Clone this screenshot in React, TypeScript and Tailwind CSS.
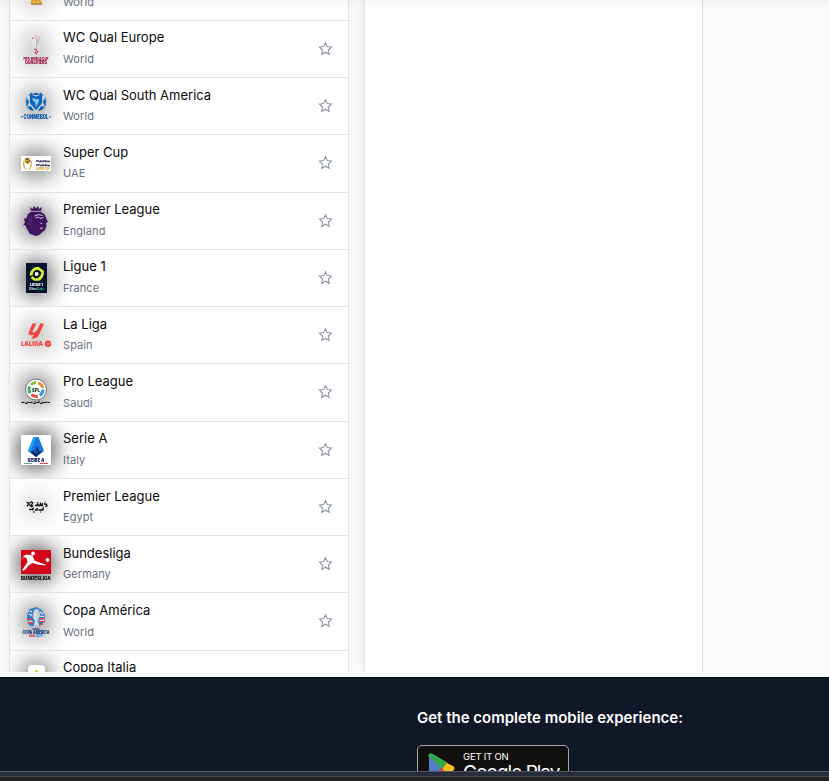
import React from "react";

type League = { name: string; region: string; logo: React.ReactNode };

const T = (p: { x?: number; y: number; w: number; size: number; fill: string; children: string; weight?: number }) => (
  <text
    x={p.x ?? 15}
    y={p.y}
    textAnchor="middle"
    textLength={p.w}
    lengthAdjust="spacingAndGlyphs"
    fontSize={p.size}
    fontWeight={p.weight ?? 900}
    fill={p.fill}
    fontFamily="Inter, sans-serif"
  >
    {p.children}
  </text>
);

const Logo = ({ children }: { children: React.ReactNode }) => (
  <svg viewBox="0 0 30 30" className="mt-px h-[30px] w-[30px] shrink-0 overflow-visible drop-shadow-[0_0_12px_#000]">
    {children}
  </svg>
);

const GoldCup = () => (
  <Logo>
    <path d="M12 17h6l1.500 6 2 4H9.500l1-4z" fill="#e5a21a" />
    <path d="M12 22h6M12 25h2m2 0h2" stroke="#fff1a8" strokeWidth="1.2" />
    <path d="M10 27.200h11" stroke="#80602f" strokeWidth=".8" />
  </Logo>
);

const WorldCup = () => (
  <Logo>
    <path d="M11 2q4-4 8 0 1 5-2 9l-1 9h-3l-1-9q-3-4-1-9" fill="#e6e0df" />
    <path d="M15 1l1 9-1 5M18.500 3l-2 7" fill="none" stroke="#a6a0a1" strokeWidth=".8" />
    <path d="M11 5l1.500-1.500M13 15l3 1-2 3 2 1m1-3-1 2" fill="none" stroke="#bd2952" strokeWidth="1" />
    <T y={26} w={25} size={4} fill="#9c123e">FIFA WORLD CUP</T>
    <T y={29.700} w={22} size={4.600} fill="#9c123e">QUALIFIERS</T>
  </Logo>
);

const Conmebol = () => (
  <Logo>
    <path d="M8 2.500l3-2 1 3-2 3zM22 2.500l-3-2-1 3 2 3zM5 6l3 3-1 4-2 1zM25 6l-3 3 1 4 2 1zM6 15l4-1 3 5-4-1zM24 15l-4-1-3 5 4-1z" fill="#0a66b8" />
    <path d="M13 1h4l1 2h-6zM9 5l3-1.500 3 1 3-1L21 5v6l-6 7-6-7z" fill="#0a66b8" />
    <path d="M12 6l3 1h3v2.500L15 15l-1-4.500-3-3z" fill="#86c3ea" />
    <path d="M6 5q-2.500 6 2 11M24 5q2.500 6-2 11" fill="none" stroke="#3d93d0" strokeWidth=".8" />
    <T y={27} w={25} size={6} fill="#0a58a8">CONMEBOL</T>
    <path d="M0 24.800h1.500m27 0H30" stroke="#0a58a8" strokeWidth="1.200" />
  </Logo>
);

const SuperCup = () => (
  <Logo>
    <path fill="#fff" d="M0 7h30v15H0z" />
    <path d="M3 12q-1.500 6 2.500 8.500M10 12q1.500 6-2.500 8.500" fill="none" stroke="#e0b14a" strokeWidth="1.400" />
    <circle cx="6.500" cy="11.500" r="3" fill="#d9a833" />
    <path d="M4.500 10l1.500 1 1-2m1 2 1 1.500m-3.500.5H7v1.500" stroke="#242027" fill="none" strokeWidth=".9" />
    <path d="M15 12h2v-1m1 1.500h2v-1.500m1 1.500h2V11m1 1.500h1V11m1 1.500h3M15 16h3v-1m1 1.500h3V15m1 1.500h2V15m1 1.500h3" fill="none" stroke="#433c65" strokeWidth="1.300" />
    <T x={22} y={20.800} w={14} size={3.400} fill="#d6a42c">SUPER CUP</T>
  </Logo>
);

const PremierLeague = () => (
  <Logo>
    <path d="M9 1l2.500 2L13 0l2 2.500L17 0l1 3 3-2-1 4.500H10z" fill="#41145f" />
    <path d="M10 6h10q4 1.500 5 6l2 4-2 1 .5 3-1.500 4-3 2.500-3 2.500-3 1-6-2-3-5-2-4-2 .5 2-3-1-3.500 2.500-1L7 8z" fill="#41145f" />
    <path d="M10 5.300h10" stroke="#b9aec3" strokeWidth=".7" />
    <path d="M13.500 10q4-2.500 8-.5m-7 2.500 3-1 1.500 1.500 3.500-1m-3 5.500 1.500.8M19 22.500l3-.5" fill="none" stroke="#d9cede" strokeWidth="1" />
    <path d="M7 11l4 2-3 1 3 2-4 1 4 3" fill="none" stroke="#5b3075" strokeWidth=".7" />
  </Logo>
);

const Ligue1 = () => (
  <Logo>
    <path fill="#07132e" d="M5 0h21v30H5z" />
    <path d="M10 12.500q0-4 3.500-6.500l5-.5M10.500 14l3 2.500h4q3.500-2 4-6M13.500 5.500h4l4 3v3" fill="none" stroke="#d3ee35" strokeWidth="2.700" />
    <circle cx="15.600" cy="11" r="2" fill="#fff" />
    <T x={15.500} y={22.500} w={13} size={3.500} fill="#fff">LIGUE 1</T>
    <T x={12} y={26.500} w={8} size={3} fill="#b8cad0">Uber</T>
    <T x={19.500} y={26.500} w={7} size={3} fill="#15a66d">Eats</T>
  </Logo>
);

const LaLiga = () => (
  <Logo>
    <path d="M11.500 2.500h4L11.500 10q-.7 1.500.8 1.500l1.500-.5q2.500-1.500 4.700-7l.5-1.500h4L18.500 13q-2 3.500-5 4.500H10l3-3.500q-7 1-5-3.500z" fill="#f34641" />
    <path d="M18 3l-4 8" fill="none" stroke="#fff" strokeWidth=".5" />
    <T x={11} y={25.200} w={22} size={6.500} fill="#f34641">LALIGA</T>
    <circle cx="27" cy="22.800" r="3.200" fill="#f34641" />
    <path d="M25 22.800h4m-3 2 3-3" stroke="#ffb1ab" strokeWidth=".6" />
  </Logo>
);

const ProLeague = () => (
  <Logo>
    <circle cx="15" cy="11.500" r="10.500" fill="#fff" stroke="#666" strokeWidth=".9" />
    <g fill="none" strokeWidth="3">
      <circle cx="15" cy="11.500" r="7" stroke="#46ad62" strokeDasharray="7 37" strokeDashoffset="-18" />
      <circle cx="15" cy="11.500" r="7" stroke="#e5533c" strokeDasharray="7 37" strokeDashoffset="-9" />
      <circle cx="15" cy="11.500" r="7" stroke="#2c9fc9" strokeDasharray="7 37" />
      <circle cx="15" cy="11.500" r="7" stroke="#8abf3f" strokeDasharray="6 38" strokeDashoffset="-27" />
      <circle cx="15" cy="11.500" r="7" stroke="#ef8b33" strokeDasharray="7 37" strokeDashoffset="-35" />
    </g>
    <T y={13.500} w={8} size={4.500} fill="#263b36">SPL</T>
    <path d="M0 24.500h3v-1m1 2h2v-2m1 1h4v-1m1 2h2v-2m1 1h3v-2m1 3h2v-2m1 1h4v-1m1 1h2" fill="none" stroke="#191919" strokeWidth="1.100" />
  </Logo>
);

const SerieA = () => (
  <Logo>
    <path fill="#fff" d="M0 0h30v30H0z" />
    <path d="M12.500 2h5L23 16l-8 6-8-6z" fill="#1677e0" />
    <path d="M12.500 2h3L9 17.500 7 16z" fill="#19a5f5" />
    <path d="M15.500 10l2.500 6 3 .5-6 5.500-6-5.500 3-.5 3-3z" fill="#102969" />
    <path d="M15.500 12.500L13 17h4" fill="none" stroke="#288be5" strokeWidth=".8" />
    <T y={26.500} w={17} size={4.600} fill="#141b60">SERIE A</T>
    <path d="M3 28.500h8" stroke="#4eb778" /><path d="M19 28.500h8" stroke="#e64453" />
  </Logo>
);

const Egypt = () => (
  <Logo>
    <path d="M5.500 10l2 1.500L11 9.500M7.500 12L6 14.500m2-2 3 2.500m1-5-1.500 3 1.500 1.500m2-1h2l.7-1.500.6 1.500H19l.5-1.800.8 1.800h1.200V11m1.500 1h2l1 1.500-1.500 1.500M8 17.500h3l1-1v2m2-.500h2v-2m1.500 2H21l1-1.500v2" fill="none" stroke="#101010" strokeWidth="1.400" />
    <path d="M16.500 10.500h1m6-.500h1M12 20h2m5 0h1" stroke="#111" />
  </Logo>
);

const Bundesliga = () => (
  <Logo>
    <path fill="#d40519" d="M0 0h30v24H0z" />
    <circle cx="12" cy="3.500" r="1.900" fill="#fff" />
    <path d="M1.500 9l1-3 3-1.500 6 1 2 5 6 2.500 5 1.500v1l-8-1-5-1.500-4 2.500-3 4-3 1.500v-1.500l2-3 3-4-1-4.500-3-1-2 2z" fill="#fff" />
    <circle cx="26.500" cy="10" r="1.900" fill="#fff" />
    <T y={29.900} w={30} size={4.600} fill="#111">BUNDESLIGA</T>
  </Logo>
);

const CopaAmerica = () => (
  <Logo>
    <path d="M6 8l3-6 6-2 6 3 3 6-1 6-4 4H9l-3-5z" fill="#2f80cc" />
    <path d="M6 12l5 .5m-4 3 5 .500m7-4 5-.5m-5 3 5-.5m-5 3h3" stroke="#e63744" strokeWidth="1.600" />
    <path d="M8 7l3 1.500M9 4l2 1m8 0 3 2m-4 2 5 .5M6.500 14l5 .5m7-1 5-.5" stroke="#f5f6f8" strokeWidth="1.200" />
    <path d="M13 3q2.500-2 5 0l1 4-1 4-1 3 1.500 5h-6l1.500-5-2.500-4 .5-3z" fill="#c9cbce" />
    <path d="M14.500 4l.5 14" stroke="#efefef" strokeWidth="1" />
    <T y={22.500} w={8} size={2.500} fill="#284c8b">CONMEBOL</T>
    <T y={26.700} w={27} size={4.600} fill="#163c81">COPA AMERICA</T>
    <T x={11} y={30} w={6} size={3.300} fill="#dc3945">USA</T>
    <T x={18} y={30} w={7} size={3.300} fill="#2789cc">2024</T>
  </Logo>
);

const CoppaItalia = () => (
  <Logo>
    <rect x="7" y="1" width="17" height="27" rx="4" fill="#fff" />
    <path d="M14.500 6.500l1-1 1 1 1 3h-4z" fill="#d9c71d" />
  </Logo>
);

const leagues: League[] = [
  { name: "Gold Cup", region: "World", logo: <GoldCup /> },
  { name: "WC Qual Europe", region: "World", logo: <WorldCup /> },
  { name: "WC Qual South America", region: "World", logo: <Conmebol /> },
  { name: "Super Cup", region: "UAE", logo: <SuperCup /> },
  { name: "Premier League", region: "England", logo: <PremierLeague /> },
  { name: "Ligue 1", region: "France", logo: <Ligue1 /> },
  { name: "La Liga", region: "Spain", logo: <LaLiga /> },
  { name: "Pro League", region: "Saudi", logo: <ProLeague /> },
  { name: "Serie A", region: "Italy", logo: <SerieA /> },
  { name: "Premier League", region: "Egypt", logo: <Egypt /> },
  { name: "Bundesliga", region: "Germany", logo: <Bundesliga /> },
  { name: "Copa América", region: "World", logo: <CopaAmerica /> },
  { name: "Coppa Italia", region: "Italy", logo: <CoppaItalia /> },
];

const StarIcon = () => (
  <svg viewBox="0 0 24 24" className="mr-[15px] h-4 w-4 shrink-0" fill="none" stroke="#8c94a5" strokeWidth="1.600" strokeLinejoin="miter">
    <path d="M12.700 2.500l2.700 5.900 6.300.7-4.700 4.400 1.300 6.500-5.600-3.200-5.600 3.200 1.300-6.500L3.700 9.100l6.300-.7z" />
  </svg>
);

const Row = ({ name, region, logo }: League) => (
  <li className="flex h-[57.270px] items-center overflow-hidden border-b border-[#e2e3e4] bg-white pl-[11px]">
    {logo}
    <div className="ml-3 min-w-0 flex-1 pt-[0.200px]">
      <div className="text-[13px] leading-[21.500px] text-[#0a0a0a]">{name}</div>
      <div className="text-[11px] leading-[21.500px] tracking-[0.080px] text-[#6b7280]">{region}</div>
    </div>
    <StarIcon />
  </li>
);

export default function App() {
  return (
    <div className="flex h-[781px] w-[829px] flex-col overflow-hidden bg-[#fafaf8] font-['Inter',sans-serif]">
      <main className="relative flex h-[672px] shrink-0 gap-[15px] overflow-hidden pl-[9px]">
        <div className="w-[340px] shrink-0 border-x border-[#e2e3e4] bg-white shadow-[-3px_0_7px_rgba(0,0,0,0.04)]">
          <ul className="-mt-[36.570px]">
            {leagues.map((l, i) => <Row key={i} {...l} />)}
          </ul>
        </div>
        <div className="w-[339px] shrink-0 border-x border-[#e2e3e4] bg-white shadow-[-3px_0_7px_rgba(0,0,0,0.04)]" />
        <div className="pointer-events-none absolute inset-x-0 top-0 h-[9px] bg-gradient-to-b from-black/[0.035] to-transparent" />
      </main>
      <footer className="mt-[5px] h-[94px] shrink-0 overflow-hidden border-t border-[#030817] bg-[#111827] pl-[417px]">
        <h2 className="mt-[29px] whitespace-nowrap text-[15px] font-semibold leading-[22px] text-white">Get the complete mobile experience:</h2>
        <div className="mt-4 flex h-[45px] w-[152px] rounded-[5px] border border-[#a6a6a6] bg-[#100f0d] pl-[10px]">
          <svg viewBox="0 0 27 30" className="mt-[7px] h-[30px] w-[27px] shrink-0">
            <path d="M1 1v28l13-14z" fill="#557bcf" />
            <path d="M0 3Q1-1 5 1l15 9-6 6z" fill="#34a94b" />
            <path d="M14 16l5-6 6 3q3 2 0 5l-6 3z" fill="#fbbc14" />
            <path d="M0 27l14-12 5 6-14 8q-4 2-5-2" fill="#ea4335" />
          </svg>
          <div className="ml-2 mt-[5px] text-white">
            <div className="whitespace-nowrap text-[9.500px] leading-[12px] tracking-[-0.200px]">GET IT ON</div>
            <div className="-mt-px whitespace-nowrap text-[19px] font-normal leading-[21px] tracking-[-1px]">Google Play</div>
          </div>
        </div>
      </footer>
      <div className="h-[5px] shrink-0 border-t border-[#51576a] bg-[#292c3a]" />
      <div className="h-[5px] shrink-0 border-t border-[#494744] bg-[#22211f]" />
    </div>
  );
}
